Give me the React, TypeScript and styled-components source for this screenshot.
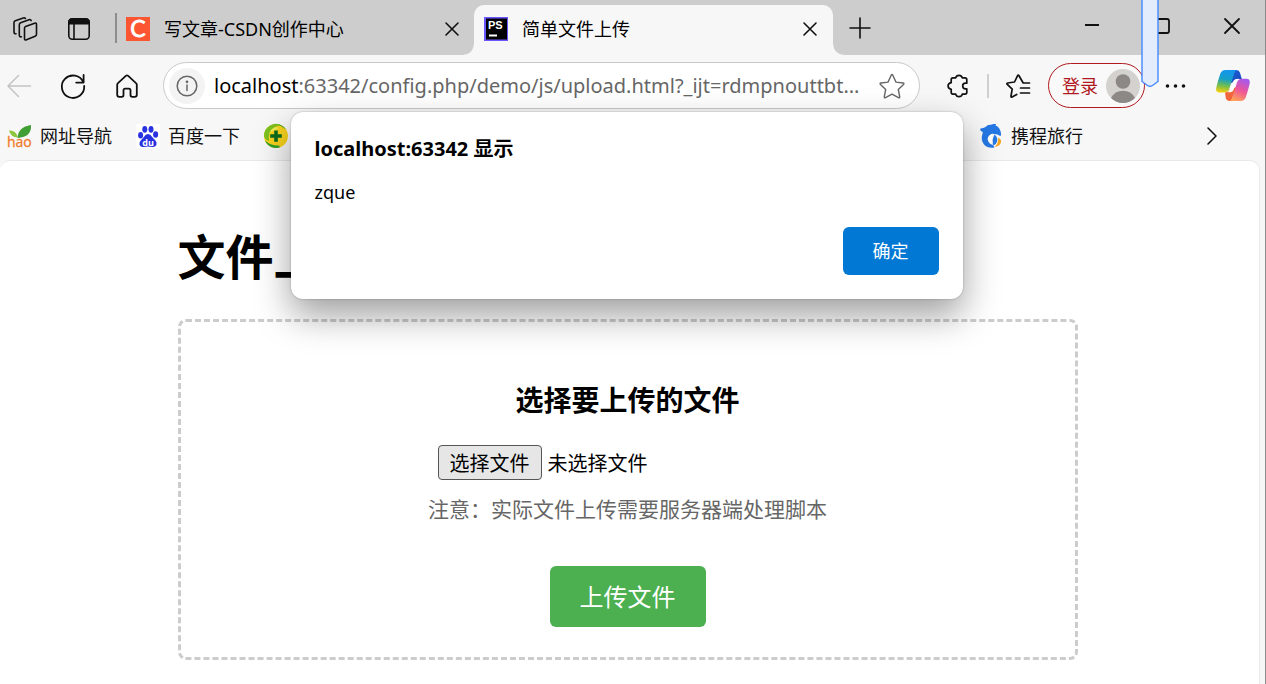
import React from "react";
import styled, { createGlobalStyle } from "styled-components";

const GlobalStyle = createGlobalStyle`
  *, *::before, *::after { box-sizing: border-box; }
  body {
    margin: 0;
    background: #f7f7f7;
    color: #000;
    font-family: "Noto Sans", "Noto Sans CJK SC", sans-serif;
  }
  button { font: inherit; cursor: pointer; }
  svg { flex: none; overflow: visible; }
`;

const Window = styled.div`
  position: relative;
  display: flex;
  flex-direction: column;
  min-height: 100vh;
  border-right: 1px solid #8a8a8a;
  background: #f7f7f7;
  overflow: hidden;
`;

/* ---------- tab strip ---------- */

const TabStrip = styled.header`
  display: flex;
  align-items: stretch;
  height: 55px;
  background: #cdcdcd;
`;

const IconButton = styled.button<{ $width?: number; $color?: string }>`
  display: inline-flex;
  flex: none;
  align-items: center;
  justify-content: center;
  width: ${(p) => p.$width ?? 24}px;
  padding: 0;
  border: 0;
  background: none;
  color: ${(p) => p.$color ?? "#111"};
  svg { display: block; }
`;

const StripTools = styled.div`
  display: flex;
  align-items: center;
  gap: 30px;
  padding: 2px 24px 0 13px;
`;

const Divider = styled.span<{ $height: number; $color: string }>`
  flex: none;
  align-self: center;
  width: 2px;
  height: ${(p) => p.$height}px;
  background: ${(p) => p.$color};
`;

const Tab = styled.div<{ $active?: boolean }>`
  position: relative;
  display: flex;
  align-items: center;
  gap: 14px;
  flex: 0 1 ${(p) => (p.$active ? 359 : 357)}px;
  min-width: 0;
  margin-top: ${(p) => (p.$active ? 5 : 0)}px;
  padding: ${(p) => (p.$active ? "0 11px 3px 10px" : "2px 10px 0 9px")};
  border-radius: 10px 10px 0 0;
  background: ${(p) => (p.$active ? "#f7f7f7" : "transparent")};
  font-size: 18px;
  line-height: 24px;

  ${(p) =>
    p.$active &&
    `
    &::before, &::after {
      content: "";
      position: absolute;
      bottom: 0;
      width: 10px;
      height: 10px;
    }
    &::before {
      left: -10px;
      background: radial-gradient(circle at 0 0, transparent 9px, #f7f7f7 10px);
    }
    &::after {
      right: -10px;
      background: radial-gradient(circle at 100% 0, transparent 9px, #f7f7f7 10px);
    }
  `}
`;

const TabTitle = styled.span`
  flex: 1;
  overflow: hidden;
  white-space: nowrap;
  text-overflow: ellipsis;
`;

const WindowControls = styled.div`
  display: flex;
  gap: 46px;
  margin-left: auto;
  padding: 0 21px 4px 0;
`;

/* ---------- address bar ---------- */

const Toolbar = styled.div`
  display: flex;
  align-items: center;
  height: 57px;
  padding: 4px 15px 0 7px;
`;

const NavTools = styled.nav`
  display: flex;
  gap: 30px;
  margin-right: 24px;
`;

const AddressBar = styled.div`
  position: relative;
  display: flex;
  flex: 1;
  align-items: center;
  gap: 9px;
  min-width: 0;
  height: 47px;
  padding: 0 14px 0 5px;
  border: 1px solid #c9c9c9;
  border-radius: 24px;
  background: #fff;
`;

const SiteInfo = styled.button`
  display: grid;
  flex: none;
  place-items: center;
  width: 36px;
  height: 36px;
  padding: 0;
  border: 0;
  border-radius: 50%;
  background: #f3f3f3;
  color: #666;
`;

const Url = styled.span`
  flex: 1;
  overflow: hidden;
  white-space: nowrap;
  text-overflow: ellipsis;
  color: #666;
  font-size: 20px;
  line-height: 28px;
  b { color: #000; font-weight: 400; }
`;

const ToolbarEnd = styled.div`
  display: flex;
  align-items: center;
  gap: 18px;
  margin-left: 25px;
`;

const FavoritesButton = styled.button`
  display: flex;
  padding: 0;
  border: 0;
  margin-left: -1px;
  background: none;
  color: #111;
`;

const LoginButton = styled.button`
  display: flex;
  align-items: center;
  justify-content: space-between;
  width: 97px;
  height: 45px;
  padding: 0 4px 0 13px;
  border: 1px solid #b0191e;
  border-radius: 23px;
  background: #f9f9f9;
  color: #b0191e;
  font-size: 18px;
  line-height: 24px;
  white-space: nowrap;
`;

const CopilotButton = styled(IconButton)`
  margin-left: 11px;
`;

/* ---------- bookmarks ---------- */

const Bookmarks = styled.nav`
  display: flex;
  align-items: center;
  gap: 24px;
  height: 48px;
  padding: 0 41px 0 7px;
`;

const Bookmark = styled.a`
  display: flex;
  align-items: center;
  gap: 8px;
  color: #111;
  font-size: 18px;
  line-height: 24px;
  white-space: nowrap;
  text-decoration: none;
`;

const BookmarksEnd = styled.div`
  display: flex;
  align-items: center;
  gap: 117px;
  margin-left: auto;
`;

/* ---------- page ---------- */

const Page = styled.main`
  flex: 1;
  margin-right: 5px;
  padding: 52px 24px 24px 20px;
  border: 1px solid #e9e9e9;
  border-bottom: 0;
  border-left: 0;
  border-radius: 10px 10px 0 0;
  background: #fff;
`;

const Column = styled.div`
  max-width: 900px;
  margin: 0 auto;
`;

const PageTitle = styled.h1`
  margin: 0 0 18px;
  font-size: 48px;
  font-weight: 700;
  line-height: 88px;
`;

const UploadForm = styled.form`
  display: flex;
  flex-direction: column;
  align-items: center;
  padding: 57px 24px 30px;
  border: 3px dashed #ccc;
  border-radius: 8px;
`;

const FormTitle = styled.h2`
  margin: 0 0 24px;
  font-size: 28px;
  font-weight: 700;
  line-height: 42px;
`;

const FileField = styled.div`
  position: relative;
  display: flex;
  align-items: center;
  gap: 6px;
  width: 380px;
  max-width: 100%;
  font-size: 20px;
  line-height: 28px;
`;

const FileInput = styled.input`
  position: absolute;
  width: 104px;
  height: 36px;
  margin: 0;
  opacity: 0;
`;

const FileButton = styled.label`
  padding: 4px 11px 1px;
  border: 1px solid #555;
  border-radius: 4px;
  background: #e6e6e6;
`;

const FileName = styled.span`
  padding-top: 2px;
`;

const Note = styled.p`
  margin: 14px 0 42px;
  color: #666;
  font-size: 21px;
  line-height: 30px;
`;

const SubmitButton = styled.button`
  padding: 13px 30px 12px;
  border: 0;
  border-radius: 6px;
  background: #4caf50;
  color: #fff;
  font-size: 24px;
  line-height: 36px;
`;

/* ---------- alert ---------- */

const AlertLayer = styled.div`
  position: absolute;
  top: 112px;
  left: 0;
  right: 12px;
  display: flex;
  justify-content: center;
`;

const Alert = styled.div`
  display: flex;
  flex-direction: column;
  width: 672px;
  max-width: 90%;
  padding: 23px 24px 24px;
  border-radius: 12px;
  background: #fff;
  box-shadow: 0 0 2px rgba(0, 0, 0, 0.3), 0 16px 36px rgba(0, 0, 0, 0.38);
  font-size: 18px;
  line-height: 28px;
`;

const AlertTitle = styled.h2`
  margin: 0 0 15px;
  font-size: 20px;
  font-weight: 700;
  line-height: 28px;
`;

const AlertText = styled.p`
  margin: 0 0 21px;
`;

const AlertButton = styled.button`
  align-self: flex-end;
  width: 96px;
  height: 48px;
  padding: 0;
  border: 0;
  border-radius: 6px;
  background: #0078d4;
  color: #fff;
  font-size: 18px;
`;

const DragMarker = styled.svg`
  position: absolute;
  top: 0;
  right: 106px;
`;

/* ---------- drawings ---------- */

type StrokeProps = {
  w?: number;
  h?: number;
  sw?: number;
  children: React.ReactNode;
};

const Stroke = ({ w = 24, h = 24, sw = 1.6, children }: StrokeProps) => (
  <svg
    width={w}
    height={h}
    viewBox={`0 0 ${w} ${h}`}
    fill="none"
    stroke="currentColor"
    strokeWidth={sw}
    strokeLinecap="round"
    strokeLinejoin="round"
    aria-hidden="true"
  >
    {children}
  </svg>
);

const Workspaces = () => (
  <Stroke>
    <path d="M12.6 9.4 21.6 6.200q1.900-.6 1.900 1.300v9.700q0 1.500-1.400 2L13.500 22.800q-2 .6-2-1.400V11q0-1.200 1.100-1.600Z" />
    <path d="M8.400 19.800q-2.100.3-2.100-1.700V7.700q0-1.400 1.300-1.900L16 2.700q1.700-.5 2.100.9" />
    <path d="M3 16.800Q1 17 1 15V5.600Q1 4.200 2.300 3.700L10.300.9q1.500-.5 2.100.6" />
  </Stroke>
);

const TabActions = () => (
  <Stroke>
    <rect x="1.8" y="1.8" width="20.4" height="20.4" rx="3.4" />
    <path d="M2 6.600V5q0-3 3-3h14q3 0 3 3v1.600Z" fill="currentColor" />
    <path d="M7 7v15" />
  </Stroke>
);

const CsdnLogo = () => (
  <svg width="24" height="24" viewBox="0 0 24 24" aria-hidden="true">
    <path fill="#fc5531" d="M0 0h24v24H0z" />
    <text x="12" y="20" textAnchor="middle" fill="#fff" stroke="#fff" strokeWidth=".8" fontFamily="Lato, sans-serif" fontWeight="400" fontSize="23">C</text>
  </svg>
);

const PhpStormLogo = () => (
  <svg width="24" height="24" viewBox="0 0 24 24" aria-hidden="true">
    <path fill="#6b57ff" d="M0 0h24v24H0z" />
    <path fill="#000" d="M2 1.500h21v21H2z" />
    <text x="4" y="12" fill="#fff" fontFamily="Liberation Sans, sans-serif" fontWeight="700" fontSize="11">PS</text>
    <path fill="#fff" d="M5 17.500h8v2H5z" />
  </svg>
);

const Cross = ({ s = 12, sw = 1.6 }: { s?: number; sw?: number }) => (
  <Stroke w={s + 2} h={s + 2} sw={sw}>
    <path d={`M1 1l${s} ${s}M${s + 1} 1l-${s} ${s}`} />
  </Stroke>
);

const Plus = () => (
  <Stroke w={22} h={22} sw={1.6}>
    <path d="M11 1v20M1 11h20" />
  </Stroke>
);

const Minimize = () => (
  <Stroke w={16} h={16} sw={2}>
    <path d="M1 7h14" strokeLinecap="butt" />
  </Stroke>
);

const Maximize = () => (
  <Stroke w={16} h={16} sw={1.8}>
    <rect x="1" y="1" width="14" height="14" rx="2" />
  </Stroke>
);

const BackArrow = () => (
  <Stroke sw={1.5}>
    <path d="M23.500 12H1M11.500 1.500 1 12l10.500 10.500" />
  </Stroke>
);

const Refresh = () => (
  <Stroke sw={1.8}>
    <path d="M22.400 8.500A11.200 11.200 0 1 0 23.200 12M22.600 1v7.600h-7.400" />
  </Stroke>
);

const Home = () => (
  <Stroke sw={1.8}>
    <path d="M2.200 10.800q0-1 .8-1.700l7.800-7.200q1.200-1 2.400 0L21 9.100q.8.700.8 1.700v10q0 2-2 2h-2.600q-1.700 0-1.700-1.700v-4.800q0-1.600-1.600-1.600h-3.800q-1.600 0-1.600 1.600v4.800q0 1.700-1.700 1.700H4.200q-2 0-2-2Z" />
  </Stroke>
);

const Info = () => (
  <Stroke w={22} h={22} sw={1.5}>
    <circle cx="11" cy="11" r="9.8" />
    <path d="M11 10v5.500" />
    <circle cx="11" cy="6.8" r=".6" fill="currentColor" />
  </Stroke>
);

const Star = () => (
  <Stroke w={26} h={26} sw={1.4}>
    <path d="M12.200 2.200q.8-1.500 1.600 0L17 9.100l7 .9q1.600.3.500 1.500l-5.200 5 1.400 7.200q.2 1.600-1.200.9L13 21.200l-6.500 3.400q-1.400.7-1.200-.9l1.400-7.200-5.200-5Q.400 10.300 2 10l7-.9Z" />
  </Stroke>
);

const Puzzle = () => (
  <Stroke sw={1.7}>
    <path d="M8 3.900h2.700q.7-2.600 3.300-2.600t3.300 2.600h2.700q1.800 0 1.800 1.800v3.500h-1.300a2.800 2.800 0 0 0 0 5.600h1.300v3.500q0 1.800-1.800 1.800h-2.700q-.7 2.600-3.300 2.600t-3.300-2.600H8q-1.800 0-1.800-1.800v-3q-3.100-.6-3.100-3.300t3.100-3.300v-3q0-1.800 1.800-1.800Z" />
  </Stroke>
);

const Favorites = () => (
  <Stroke sw={1.7}>
    <path d="M23.500 9h-6.300L13 1.800q-.7-1.300-1.500 0L8.500 8l-6.800 1q-1.500.3-.4 1.400l4.900 4.700-1.200 6.900q-.2 1.500 1.100.9l4.600-2.400M14.500 14h9M14.500 19h9" />
  </Stroke>
);

const Avatar = () => (
  <svg width="34" height="34" viewBox="0 0 34 34" aria-hidden="true">
    <circle cx="17" cy="17" r="17" fill="#d4d2cf" />
    <circle cx="17" cy="12.5" r="7.3" fill="#8b8885" />
    <path fill="#8b8885" d="M5 29q4-7.200 12-7.200T29 29a17 17 0 0 1-24 0Z" />
  </svg>
);

const Dots = () => (
  <svg width="24" height="24" viewBox="0 0 24 24" fill="#111" aria-hidden="true">
    <circle cx="4.5" cy="12" r="1.8" />
    <circle cx="12.5" cy="12" r="1.8" />
    <circle cx="20.5" cy="12" r="1.8" />
  </svg>
);

const Copilot = () => (
  <svg width="34" height="31" viewBox="0 0 34 31" aria-hidden="true">
    <defs>
      <linearGradient id="cpLeft" x1=".5" y1="0" x2=".35" y2="1">
        <stop offset="0" stopColor="#1595ee" />
        <stop offset=".4" stopColor="#159fc9" />
        <stop offset=".7" stopColor="#70bd52" />
        <stop offset="1" stopColor="#f4cf0b" />
      </linearGradient>
      <linearGradient id="cpRight" x1=".7" y1="0" x2=".3" y2="1">
        <stop offset="0" stopColor="#a459ee" />
        <stop offset=".5" stopColor="#ee5599" />
        <stop offset="1" stopColor="#ffa456" />
      </linearGradient>
      <linearGradient id="cpTop" x1="0" y1="0" x2="1" y2="1">
        <stop offset="0" stopColor="#1d62d8" />
        <stop offset="1" stopColor="#1747ba" />
      </linearGradient>
    </defs>
    <path fill="url(#cpTop)" d="M16 0h4.500q2.600 0 3.500 2.800L25.800 9H21q-3 0-4.500 3.500L13 14Z" />
    <path fill="#f3653b" d="M9 22.500q3 0 4.500-3.500L21 17l-6 14h-2q-2.400 0-3.200-2.700Z" />
    <path fill="url(#cpLeft)" d="M9.500 0H21q-2 .5-2.800 3.200L13.200 19q-1.500 3.500-5 3.500H3.800Q-.8 22.500.3 17.500q1.500-6.500 3.900-13.600Q5.600 0 9.500 0Z" />
    <path fill="url(#cpRight)" d="M24.500 31H13.500q2-.5 2.800-3.200l4.800-15.500Q22.300 8.700 26 8.700h4.300q4.400 0 3.300 5.300-1.500 6.300-3.800 13.200Q28.500 31 24.500 31Z" />
    <path fill="#fff" d="M18.500 10q2-1.300 4-1.300-1.500 1-2 2.500L17.500 20q-.7 1.800-3 2.300h-3q1.500-1 2.200-3.200Z" />
  </svg>
);

const HaoLogo = () => (
  <svg width="25" height="24" viewBox="0 0 25 24" aria-hidden="true">
    <path fill="#8dc63a" d="M2 6.500q7-.5 9 7-7.500-.5-9-7Z" />
    <path fill="#3f9f35" d="M24 1q1 12-13.500 13Q11 3 24 1Z" />
    <text x="0" y="23" fill="#f07a2b" stroke="#f07a2b" strokeWidth=".3" fontFamily="Open Sans, sans-serif" fontWeight="500" fontSize="14">hao</text>
  </svg>
);

const BaiduLogo = () => (
  <svg width="24" height="24" viewBox="0 0 24 24" aria-hidden="true">
    <path fill="#fff" d="M0 0h24v24H0z" />
    <g fill="#2932e1">
      <ellipse cx="4.600" cy="11.300" rx="2.500" ry="3.200" />
      <ellipse cx="8.800" cy="5.300" rx="2.500" ry="3.400" />
      <ellipse cx="15" cy="5.300" rx="2.500" ry="3.400" />
      <ellipse cx="19.600" cy="10.500" rx="2.500" ry="3.200" />
      <path d="M12 10q2.500 0 4 2.700 1 1.600 3 3.200 2.500 2.200 1.500 4.800-1.200 2.700-4.500 2.200-4-.6-8 0-3.600.5-4.500-2.200-.8-2.700 1.700-4.800 1.800-1.600 2.800-3.200Q9.500 10 12 10Z" />
    </g>
    <text x="12" y="21.500" textAnchor="middle" fill="#fff" fontFamily="Open Sans, sans-serif" fontWeight="700" fontSize="9">du</text>
  </svg>
);

const SafeLogo = () => (
  <svg width="24" height="24" viewBox="0 0 24 24" aria-hidden="true">
    <circle cx="12" cy="12" r="12" fill="#f8d21c" />
    <path fill="#7cc01f" d="M0 12A12 12 0 0 1 18 1.600Q8 2 5.500 9 4.500 12 5 17 1 16 0 12Z" />
    <path fill="#e9ef5a" d="M5 10Q7 4 13 3 15 5 11 6 7 7 5 10Z" />
    <path fill="#2f9e2b" d="M14 .2A12 12 0 0 1 22 5.500Q18 2.500 14 .2ZM1 16.500Q7 22 15 21.500l1 1.800A12 12 0 0 1 1 16.500Z" />
    <path fill="#0c6b1c" d="M10.200 6.500h3.600v3.700h4v3.600h-4v4h-3.600v-4h-4v-3.600h4Z" />
  </svg>
);

const CtripLogo = () => (
  <svg width="24" height="24" viewBox="0 0 24 24" aria-hidden="true">
    <path fill="#2577e3" d="M1.500 4.500q3-.5 5-1.500Q8.500.5 12 .8L14.500 0h2.500l-.5 1.500Q21 3 22 9.500q.5 2-.8 2.500-3.200-2.500-7.200-2-5.500 1-5 6 .5 4 5 5l1.500 2.500Q9 24.800 5 20.500 1.500 16 3.500 9.500 4.500 8 3 7.500.500 6.500 1.500 4.500Z" />
    <path fill="#f5a623" d="M19 13.500q4.500 2 2.500 6-1.800 3.300-6 3.300 4.500-3.500 3.500-9.300Z" />
    <path fill="#2577e3" d="M15.500 10.500q3.500 2.500 2.600 7-.8 3-3.800 4-2-5 1.200-11Z" />
    <path fill="#fff" d="M8.500 15q1-4.500 5.500-5.500-2.500 4-.3 9.500Q10 19 8.500 15Z" />
  </svg>
);

const Chevron = () => (
  <Stroke w={12} h={20} sw={1.6}>
    <path d="M2 2l8 8-8 8" />
  </Stroke>
);

export default function App() {
  return (
    <>
      <GlobalStyle />
      <Window>
        <TabStrip>
          <StripTools>
            <IconButton aria-label="工作区"><Workspaces /></IconButton>
            <IconButton aria-label="标签操作"><TabActions /></IconButton>
          </StripTools>
          <Divider $height={30} $color="#8c8c8c" />
          <Tab>
            <CsdnLogo />
            <TabTitle>写文章-CSDN创作中心</TabTitle>
            <IconButton aria-label="关闭标签页"><Cross /></IconButton>
          </Tab>
          <Tab $active>
            <PhpStormLogo />
            <TabTitle>简单文件上传</TabTitle>
            <IconButton aria-label="关闭标签页"><Cross /></IconButton>
          </Tab>
          <IconButton $width={53} aria-label="新建标签页"><Plus /></IconButton>
          <WindowControls>
            <IconButton aria-label="最小化"><Minimize /></IconButton>
            <IconButton aria-label="最大化"><Maximize /></IconButton>
            <IconButton aria-label="关闭"><Cross s={14} sw={1.8} /></IconButton>
          </WindowControls>
        </TabStrip>

        <Toolbar>
          <NavTools>
            <IconButton $color="#c4c4c4" aria-label="返回"><BackArrow /></IconButton>
            <IconButton aria-label="刷新"><Refresh /></IconButton>
            <IconButton aria-label="主页"><Home /></IconButton>
          </NavTools>
          <AddressBar>
            <SiteInfo aria-label="网站信息"><Info /></SiteInfo>
            <Url><b>localhost</b>:63342/config.php/demo/js/upload.html?_ijt=rdmpnouttbt...</Url>
            <IconButton $width={26} $color="#666" aria-label="收藏此页"><Star /></IconButton>
          </AddressBar>
          <ToolbarEnd>
            <IconButton aria-label="扩展"><Puzzle /></IconButton>
            <Divider $height={24} $color="#d0d0d0" />
            <FavoritesButton aria-label="收藏夹"><Favorites /></FavoritesButton>
            <LoginButton>登录<Avatar /></LoginButton>
            <IconButton aria-label="更多"><Dots /></IconButton>
            <CopilotButton $width={34} aria-label="Copilot"><Copilot /></CopilotButton>
          </ToolbarEnd>
        </Toolbar>

        <Bookmarks>
          <Bookmark href="#hao"><HaoLogo />网址导航</Bookmark>
          <Bookmark href="#baidu"><BaiduLogo />百度一下</Bookmark>
          <Bookmark href="#safe" aria-label="360"><SafeLogo /></Bookmark>
          <BookmarksEnd>
            <Bookmark href="#ctrip"><CtripLogo />携程旅行</Bookmark>
            <IconButton aria-label="更多书签"><Chevron /></IconButton>
          </BookmarksEnd>
        </Bookmarks>

        <Page>
          <Column>
            <PageTitle>文件上传</PageTitle>
            <UploadForm onSubmit={(e) => e.preventDefault()}>
              <FormTitle>选择要上传的文件</FormTitle>
              <FileField>
                <FileInput id="file" type="file" />
                <FileButton htmlFor="file">选择文件</FileButton>
                <FileName>未选择文件</FileName>
              </FileField>
              <Note>注意：实际文件上传需要服务器端处理脚本</Note>
              <SubmitButton type="submit">上传文件</SubmitButton>
            </UploadForm>
          </Column>
        </Page>

        <AlertLayer>
          <Alert role="alertdialog" aria-labelledby="alert-title">
            <AlertTitle id="alert-title">localhost:63342 显示</AlertTitle>
            <AlertText>zque</AlertText>
            <AlertButton>确定</AlertButton>
          </Alert>
        </AlertLayer>

        <DragMarker width="18" height="88" viewBox="0 0 18 88" aria-hidden="true">
          <path d="M1 -2H17V81.500L11.500 85.500Q9 87 6.500 85.500L1 81.500Z" fill="#e3ecfd" stroke="#4488fb" strokeWidth="1.4" />
        </DragMarker>
      </Window>
    </>
  );
}
